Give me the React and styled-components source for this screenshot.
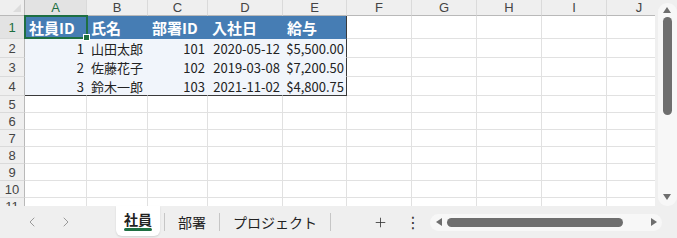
import React from 'react';
import styled, { createGlobalStyle } from 'styled-components';
import { ChevronLeft, ChevronRight, Plus } from 'lucide-react';

const GlobalStyle = createGlobalStyle`
    body {
        margin: 0;
        background: #efefef;
        font-family: "Noto Sans CJK JP", "Noto Sans", sans-serif;
    }
`;

const GREEN = '#1e6f42';
const BLUE = '#467db4';
const DATA_BG = '#f1f5fb';
const EDGE = '#3a3a3a';

const Frame = styled.div`
    width: 677px;
    height: 238px;
    display: flex;
    flex-direction: column;
    overflow: hidden;
    background: #efefef;
`;

const Main = styled.div`
    display: flex;
    height: 206px;
`;

const Sheet = styled.div`
    position: relative;
    width: 655px;
    height: 206px;
    overflow: hidden;
    background: #fff;
    display: grid;
    grid-template-columns: 25px 62px 61px 60px 75px 64px 65px 65px 65px 65px 65px;
    grid-template-rows: 16px 23px 19px 19px 19px repeat(7, 17px);
`;

const Corner = styled.div`
    position: relative;
    background: #efefef;
    border-right: 1px solid #b9b9b9;
    border-bottom: 1px solid #b9b9b9;
    &::after {
        content: '';
        position: absolute;
        right: 3px;
        bottom: 3px;
        border-left: 8px solid transparent;
        border-bottom: 8px solid #dcdcdc;
    }
`;

const ColHead = styled.div`
    background: ${p => (p.$active ? '#e3e3e3' : '#efefef')};
    border-right: 1px solid #dadada;
    border-bottom: 1px solid ${p => (p.$active ? GREEN : '#b9b9b9')};
    color: ${p => (p.$active ? GREEN : '#444')};
    font-family: "Liberation Sans", Arial, sans-serif;
    font-size: 13px;
    line-height: 15px;
    text-align: center;
`;

const RowHead = styled.div`
    background: ${p => (p.$active ? '#e3e3e3' : '#efefef')};
    border-right: 1px solid ${p => (p.$active ? GREEN : '#b9b9b9')};
    border-bottom: 1px solid #dadada;
    color: ${p => (p.$active ? GREEN : '#444')};
    font-family: "Liberation Sans", Arial, sans-serif;
    font-size: 13px;
    display: flex;
    align-items: center;
    justify-content: center;
`;

const Cell = styled.div`
    box-sizing: border-box;
    background: ${p => p.$bg || '#fff'};
    border-right: 1px solid ${p => p.$right || p.$bg || '#e1e1e1'};
    border-bottom: 1px solid ${p => p.$bottom || p.$bg || '#e1e1e1'};
    color: ${p => (p.$head ? '#fff' : '#222')};
    font-size: ${p => (p.$head ? '15px' : '13px')};
    font-weight: ${p => (p.$head ? 700 : 400)};
    display: flex;
    align-items: center;
    justify-content: ${p => (p.$num ? 'flex-end' : 'flex-start')};
    padding: 0 2px 0 4px;
    white-space: nowrap;
    overflow: hidden;
`;

const Selection = styled.div`
    position: absolute;
    left: 24px;
    top: 15px;
    width: 64px;
    height: 24px;
    box-sizing: border-box;
    border: 2px solid ${GREEN};
    pointer-events: none;
    &::after {
        content: '';
        position: absolute;
        right: -4px;
        bottom: -4px;
        width: 5px;
        height: 5px;
        background: ${GREEN};
        border: 1px solid #fff;
    }
`;

const VScroll = styled.div`
    width: 22px;
    display: flex;
    flex-direction: column;
    align-items: center;
    padding-top: 3px;
`;

const VTrack = styled.div`
    width: 19px;
    margin-left: 2px;
    height: 204px;
    background: #f7f7f7;
    border-radius: 9px;
    display: flex;
    flex-direction: column;
    align-items: center;
    padding-top: 4px;
    box-sizing: border-box;
`;

const VThumb = styled.div`
    width: 9px;
    height: 98px;
    margin-top: 4px;
    border-radius: 5px;
    background: #6e6e6e;
    flex: none;
`;

const Arrow = styled.div`
    width: 0;
    height: 0;
    flex: none;
    border-left: ${p => (p.$dir === 'up' || p.$dir === 'down' ? '4.5px solid transparent' : p.$dir === 'right' ? '6px solid #6e6e6e' : 'none')};
    border-right: ${p => (p.$dir === 'up' || p.$dir === 'down' ? '4.5px solid transparent' : p.$dir === 'left' ? '6px solid #6e6e6e' : 'none')};
    border-top: ${p => (p.$dir === 'left' || p.$dir === 'right' ? '4.5px solid transparent' : p.$dir === 'down' ? '6px solid #6e6e6e' : 'none')};
    border-bottom: ${p => (p.$dir === 'left' || p.$dir === 'right' ? '4.5px solid transparent' : p.$dir === 'up' ? '6px solid #6e6e6e' : 'none')};
`;

const Spacer = styled.div`
    flex: 1;
`;

const TabBar = styled.div`
    height: 32px;
    display: flex;
    align-items: center;
    background: #efefef;
`;

const Nav = styled.div`
    width: 116px;
    display: flex;
    align-items: center;
    gap: 18px;
    padding-left: 24px;
    box-sizing: border-box;
    color: #9a9a9a;
`;

const Tab = styled.div`
    position: relative;
    align-self: ${p => (p.$active ? 'stretch' : 'center')};
    display: flex;
    align-items: center;
    padding: ${p => (p.$active ? '0 8px 4px' : '0 13px 0 13px')};
    margin-bottom: ${p => (p.$active ? '2px' : '0')};
    background: ${p => (p.$active ? '#fff' : 'transparent')};
    border-radius: 0 0 6px 6px;
    font-size: 14px;
    font-weight: ${p => (p.$active ? 700 : 400)};
    color: #222;
    ${p => p.$active && `
        box-shadow: 0 1px 2px rgba(0,0,0,0.12);
        &::after {
            content: '';
            position: absolute;
            left: 8px;
            right: 8px;
            bottom: 5px;
            height: 3px;
            border-radius: 2px;
            background: ${GREEN};
        }
    `}
`;

const Sep = styled.div`
    width: 1px;
    height: 18px;
    background: #c6c6c6;
    margin-left: ${p => p.$ml || 0}px;
`;

const IconBtn = styled.div`
    width: 20px;
    display: flex;
    justify-content: center;
    font-size: ${p => p.$size || 18}px;
    color: #333;
    margin-left: ${p => p.$ml}px;
    font-family: "DejaVu Sans", sans-serif;
`;

const HTrack = styled.div`
    margin-left: 7px;
    width: 232px;
    height: 17px;
    border-radius: 9px;
    background: #f7f7f7;
    display: flex;
    align-items: center;
    padding: 0 5px 0 6px;
    box-sizing: border-box;
`;

const HThumb = styled.div`
    width: 176px;
    height: 9px;
    margin-left: 5px;
    border-radius: 5px;
    background: #6e6e6e;
`;

const cols = ['A', 'B', 'C', 'D', 'E', 'F', 'G', 'H', 'I', 'J'];
const header = ['社員ID', '氏名', '部署ID', '入社日', '給与'];
const rows = [
    ['1', '山田太郎', '101', '2020-05-12', '$5,500.00'],
    ['2', '佐藤花子', '102', '2019-03-08', '$7,200.50'],
    ['3', '鈴木一郎', '103', '2021-11-02', '$4,800.75'],
];
const numeric = [true, false, true, true, true];

function App() {
    const cells = [];
    // row 1: table header
    cells.push(<RowHead key="r1" $active>1</RowHead>);
    cols.forEach((c, i) => {
        if (i < 5) {
            cells.push(
                <Cell key={`1${c}`} $head $bg={BLUE} $right={i === 4 ? EDGE : BLUE}>
                    {header[i]}
                </Cell>
            );
        } else {
            cells.push(<Cell key={`1${c}`} />);
        }
    });
    rows.forEach((row, r) => {
        const last = r === rows.length - 1;
        cells.push(<RowHead key={`r${r + 2}`}>{r + 2}</RowHead>);
        cols.forEach((c, i) => {
            if (i < 5) {
                cells.push(
                    <Cell
                        key={`${r + 2}${c}`}
                        $num={numeric[i]}
                        $bg={DATA_BG}
                        $right={i === 4 ? EDGE : DATA_BG}
                        $bottom={last ? EDGE : DATA_BG}
                    >
                        {row[i]}
                    </Cell>
                );
            } else {
                cells.push(<Cell key={`${r + 2}${c}`} />);
            }
        });
    });
    for (let n = 5; n <= 11; n++) {
        cells.push(<RowHead key={`r${n}`}>{n}</RowHead>);
        cols.forEach(c => cells.push(<Cell key={`${n}${c}`} />));
    }

    return (
        <Frame>
            <GlobalStyle />
            <Main>
                <Sheet>
                    <Corner />
                    {cols.map((c, i) => (
                        <ColHead key={c} $active={i === 0}>{c}</ColHead>
                    ))}
                    {cells}
                    <Selection />
                </Sheet>
                <VScroll>
                    <VTrack>
                        <Arrow $dir="up" />
                        <VThumb />
                        <Spacer />
                        <Arrow $dir="down" />
                        <div style={{ height: 6 }} />
                    </VTrack>
                </VScroll>
            </Main>
            <TabBar>
                <Nav>
                    <ChevronLeft size={16} strokeWidth={1.5} />
                    <ChevronRight size={16} strokeWidth={1.5} />
                </Nav>
                <Tab $active>社員</Tab>
                <Sep $ml={4} />
                <Tab>部署</Tab>
                <Sep />
                <Tab>プロジェクト</Tab>
                <Sep />
                <IconBtn $ml={39}><Plus size={15} strokeWidth={1.3} /></IconBtn>
                <IconBtn $ml={13} $size={16}>⋮</IconBtn>
                <HTrack>
                    <Arrow $dir="left" />
                    <HThumb />
                    <Spacer />
                    <Arrow $dir="right" />
                </HTrack>
            </TabBar>
        </Frame>
    );
}

export default App;
